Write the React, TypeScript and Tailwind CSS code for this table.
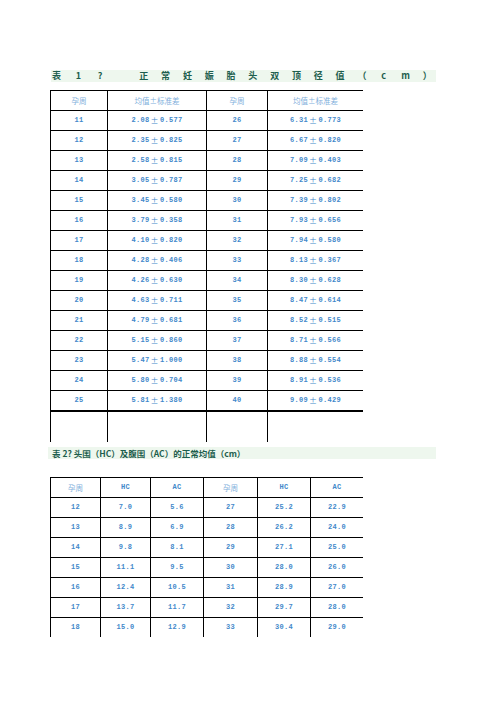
import React from "react";

const bpd = [
  ["11", "2.08±0.577", "26", "6.31±0.773"],
  ["12", "2.35±0.825", "27", "6.67±0.820"],
  ["13", "2.58±0.815", "28", "7.09±0.403"],
  ["14", "3.05±0.787", "29", "7.25±0.682"],
  ["15", "3.45±0.580", "30", "7.39±0.802"],
  ["16", "3.79±0.358", "31", "7.93±0.656"],
  ["17", "4.10±0.820", "32", "7.94±0.580"],
  ["18", "4.28±0.406", "33", "8.13±0.367"],
  ["19", "4.26±0.630", "34", "8.30±0.628"],
  ["20", "4.63±0.711", "35", "8.47±0.614"],
  ["21", "4.79±0.681", "36", "8.52±0.515"],
  ["22", "5.15±0.860", "37", "8.71±0.566"],
  ["23", "5.47±1.000", "38", "8.88±0.554"],
  ["24", "5.80±0.704", "39", "8.91±0.536"],
  ["25", "5.81±1.380", "40", "9.09±0.429"],
];

const hcac = [
  ["12", "7.0", "5.6", "27", "25.2", "22.9"],
  ["13", "8.9", "6.9", "28", "26.2", "24.0"],
  ["14", "9.8", "8.1", "29", "27.1", "25.0"],
  ["15", "11.1", "9.5", "30", "28.0", "26.0"],
  ["16", "12.4", "10.5", "31", "28.9", "27.0"],
  ["17", "13.7", "11.7", "32", "29.7", "28.0"],
  ["18", "15.0", "12.9", "33", "30.4", "29.0"],
];

const title1 = ["表", "1", "?", "", "正", "常", "妊", "娠", "胎", "头", "双", "顶", "径", "值", "（", "c", "m", "）"];

const cjk = { fontFamily: '"Noto Sans CJK SC", "Noto Sans", sans-serif' };
const mono = { fontFamily: '"Liberation Mono", "Noto Sans CJK SC", monospace' };

// mean±sd: the ± is a full-width glyph in the original
function Val({ v }: { v: string }) {
  const parts = v.split("±");
  if (parts.length < 2) return <>{v}</>;
  return (
    <>
      {parts[0]}
      <span className="px-[1px] font-normal text-[8px]" style={cjk}>±</span>
      {parts[1]}
    </>
  );
}

function Cell({ children, head, thick }: { children?: React.ReactNode; head?: boolean; thick?: boolean }) {
  return (
    <div
      className={
        "flex items-center justify-center border-l border-black " +
        (thick ? "border-t-2 h-[32px] " : "border-t h-[20px] ") +
        (head ? "text-[7.5px] text-[#7fb0dc]" : "text-[7px] font-bold tracking-[0.3px] text-[#4288ca]")
      }
      style={head ? cjk : mono}
    >
      {children}
    </div>
  );
}

export default function App() {
  return (
    <div className="w-[496px] h-[702px] bg-white overflow-hidden pt-[70px]">
      <div
        className="ml-[51px] w-[385px] h-[12px] bg-[#eef7ee] flex items-center justify-between pl-[1px] pr-[4px] text-[9px] font-bold text-[#1d5e4d]"
        style={cjk}
      >
        {title1.map((c, i) => (
          <span key={i} className="w-[9px] text-center">{c}</span>
        ))}
      </div>

      <div className="ml-[50px] mt-[8px] grid grid-cols-[57px_99px_61px_96px] w-[313px]">
        <Cell head>孕周</Cell>
        <Cell head>均值±标准差</Cell>
        <Cell head>孕周</Cell>
        <Cell head>均值±标准差</Cell>
        {bpd.map((r) => r.map((v, j) => <Cell key={r[0] + "-" + j}><Val v={v} /></Cell>))}
        <Cell thick />
        <Cell thick />
        <Cell thick />
        <Cell thick />
      </div>

      <div
        className="ml-[48px] mt-[5px] w-[388px] h-[12px] bg-[#eef7ee] flex items-center pl-[4px] text-[8.5px] font-bold text-[#1d5e4d]"
        style={cjk}
      >
        表 2? 头围（HC）及腹围（AC）的正常均值（cm）
      </div>

      <div className="ml-[50px] mt-[18px] grid grid-cols-[50px_50px_53px_54px_53px_53px] w-[313px]">
        <Cell head>孕周</Cell>
        <Cell>HC</Cell>
        <Cell>AC</Cell>
        <Cell head>孕周</Cell>
        <Cell>HC</Cell>
        <Cell>AC</Cell>
        {hcac.map((r) => r.map((v, j) => <Cell key={r[0] + "-" + j}>{v}</Cell>))}
      </div>
    </div>
  );
}
